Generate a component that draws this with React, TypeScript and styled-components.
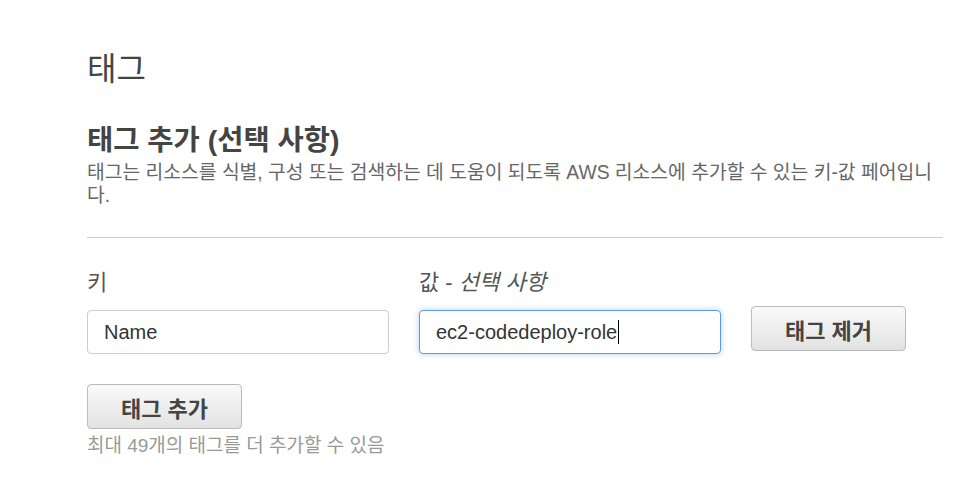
import styled, { createGlobalStyle } from 'styled-components';

const GlobalStyle = createGlobalStyle`
    html, body {
        margin: 0;
        padding: 0;
        background: #ffffff;
    }
    body {
        font-family: "Liberation Sans", "Noto Sans CJK KR", sans-serif;
        color: #444444;
    }
`;

const App = () => {
    return (
        <Page>
            <GlobalStyle />
            <PageTitle>태그</PageTitle>

            <Section>
                <Heading>태그 추가 (선택 사항)</Heading>
                <Description>
                    태그는 리소스를 식별, 구성 또는 검색하는 데 도움이 되도록 AWS 리소스에 추가할 수 있는 키-값 페어입니다.
                </Description>
            </Section>

            <Divider />

            <TagGrid>
                <Label>키</Label>
                <Label>
                    값 - <Optional>선택 사항</Optional>
                </Label>
                <span />

                <Field>Name</Field>
                <Field $focused>
                    ec2-codedeploy-role
                    <Caret />
                </Field>
                <ButtonCell>
                    <Button>태그 제거</Button>
                </ButtonCell>
            </TagGrid>

            <AddArea>
                <Button>태그 추가</Button>
                <Hint>최대 49개의 태그를 더 추가할 수 있음</Hint>
            </AddArea>
        </Page>
    );
};

const Page = styled.div`
    width: 856px;
    padding: 44px 0 0 87px;
`;

const PageTitle = styled.h1`
    margin: 0;
    font-family: "Noto Sans CJK KR", sans-serif;
    font-size: 32px;
    font-weight: 400;
    line-height: 44px;
    color: #444444;
`;

const Section = styled.div`
    margin-top: 34px;
`;

const Heading = styled.h2`
    margin: 0;
    font-family: "Liberation Sans", "Noto Sans CJK KR", sans-serif;
    font-size: 28.5px;
    font-weight: 700;
    line-height: 36px;
    color: #444444;
`;

const Description = styled.p`
    margin: 3px 0 0;
    font-size: 19.3px;
    line-height: 23px;
    color: #666666;
`;

const Divider = styled.hr`
    margin: 30px 0 0;
    border: 0;
    border-top: 1px solid #cccccc;
`;

const TagGrid = styled.div`
    display: grid;
    grid-template-columns: 302px 302px auto;
    column-gap: 30px;
    row-gap: 13px;
    margin-top: 31px;
    align-items: center;
`;

const Label = styled.div`
    font-size: 22px;
    line-height: 28px;
    color: #555555;
`;

const Optional = styled.span`
    font-style: italic;
`;

const Field = styled.div<{ $focused?: boolean }>`
    display: flex;
    align-items: center;
    box-sizing: border-box;
    height: 44px;
    padding: 0 16px;
    font-size: 20px;
    color: #333333;
    background: #ffffff;
    border: 1px solid ${(p) => (p.$focused ? '#5a9be6' : '#cccccc')};
    border-radius: 4px;
    box-shadow: ${(p) => (p.$focused ? '0 0 6px rgba(82, 150, 236, 0.45)' : 'none')};
`;

const Caret = styled.span`
    display: inline-block;
    width: 1px;
    height: 24px;
    margin-left: 1px;
    background: #000000;
`;

const ButtonCell = styled.div`
    align-self: start;
    margin-top: -4px;
`;

const Button = styled.button`
    box-sizing: border-box;
    width: 155px;
    height: 45px;
    padding: 0;
    font-family: "Liberation Sans", "Noto Sans CJK KR", sans-serif;
    font-size: 22px;
    font-weight: 700;
    color: #444444;
    background: linear-gradient(#fafafa, #e2e2e2);
    border: 1px solid #bbbbbb;
    border-radius: 4px;
`;

const AddArea = styled.div`
    margin-top: 30px;
`;

const Hint = styled.div`
    margin-top: 5px;
    font-size: 19px;
    line-height: 23px;
    color: #999999;
`;

export default App;
